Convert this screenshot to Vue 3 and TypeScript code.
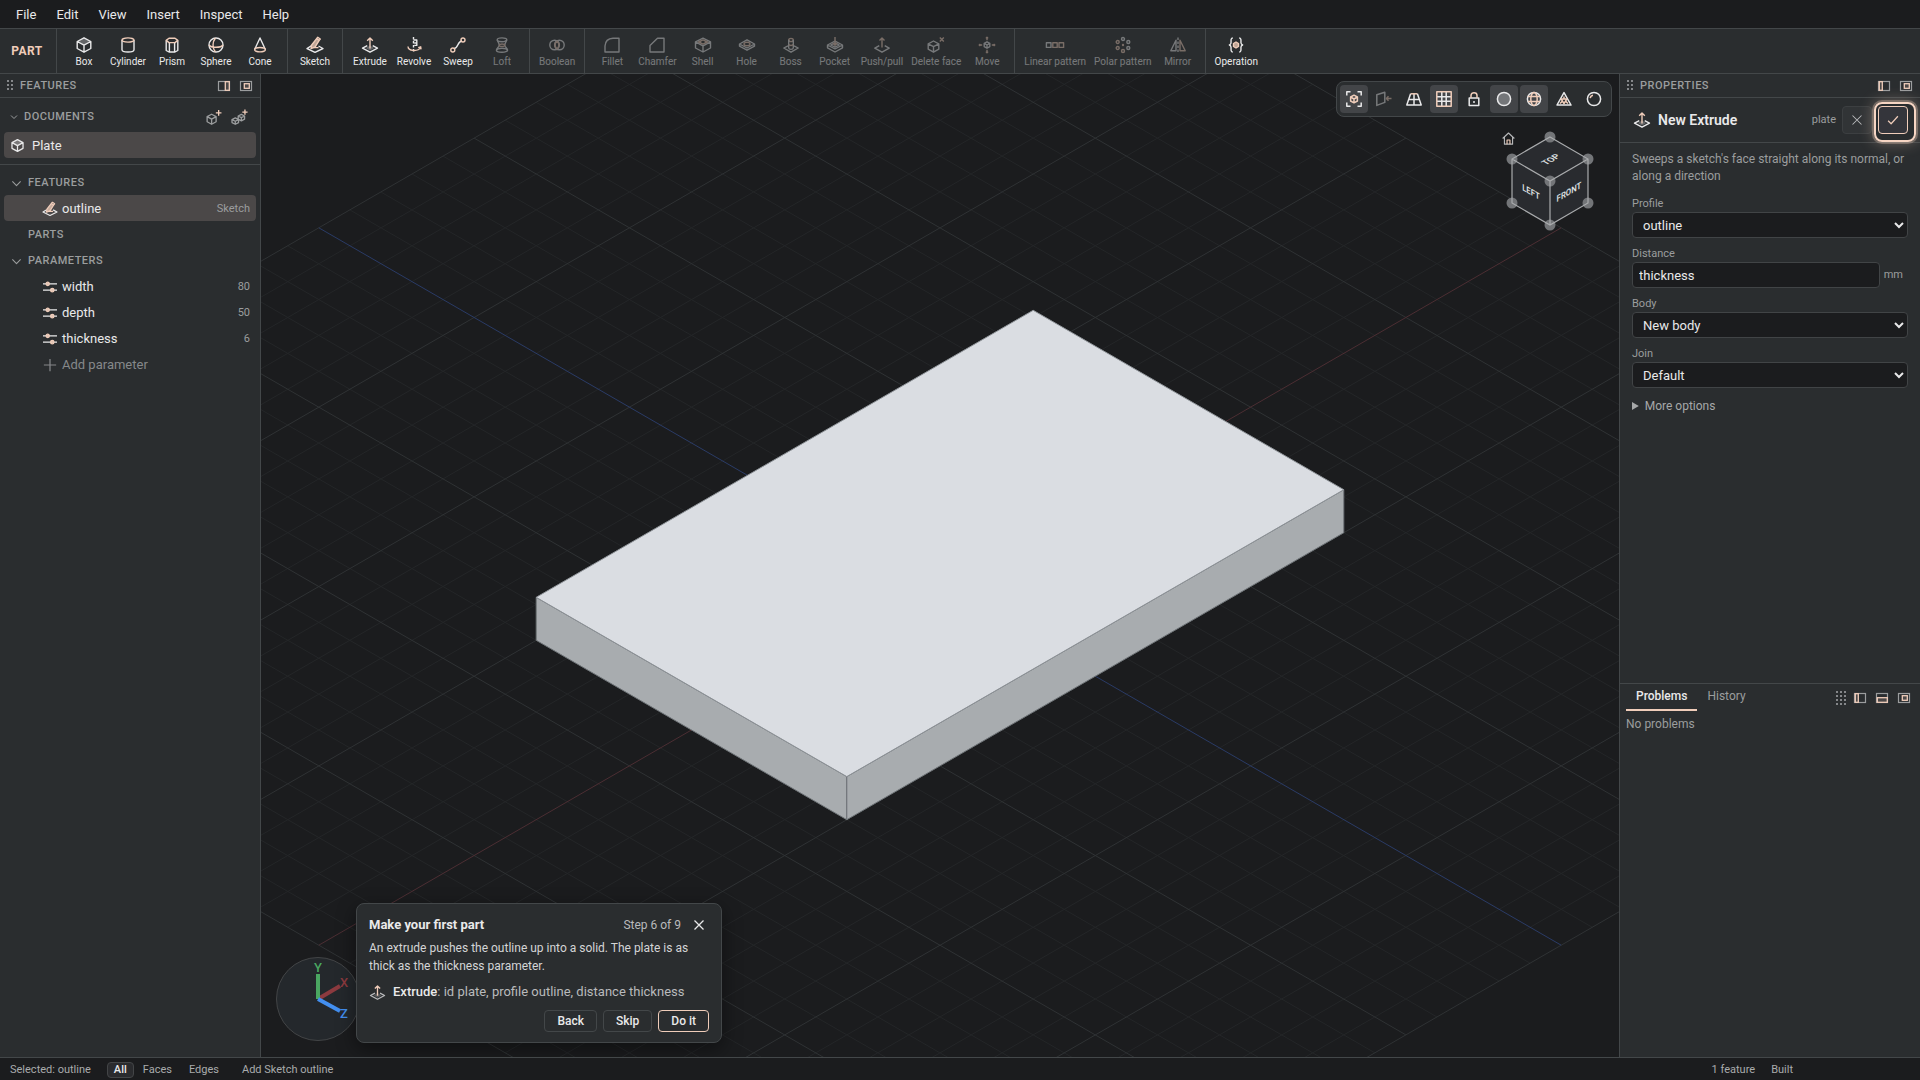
<script setup lang="ts">
import { h, ref, type FunctionalComponent } from 'vue'

type Tone = 'w' | 'a' | 'wf' | 'af' | 'd' | 'df'
type Shape = [Tone, string]

const ring = (x: number, y: number, r: number, ry = r) =>
  `M${x - r} ${y}a${r} ${ry} 0 1 0 ${2 * r} 0a${r} ${ry} 0 1 0 ${-2 * r} 0`

// w: foreground stroke, a: accent stroke, d: dashed stroke; an f suffix fills the shape too
const icons: Record<string, Shape[]> = {
  box: [['df', 'M8 .8 14.8 4.5 8 8.2 1.2 4.5Z'], ['w', 'M8 .8 14.8 4.5V11.5L8 15.2 1.2 11.5V4.5ZM1.2 4.5 8 8.2 14.8 4.5M8 8.2V15.2']],
  cylinder: [['w', 'M2 3V12.8C2 15.8 14 15.8 14 12.8V3'], ['a', ring(8, 3, 6, 2.1)]],
  prism: [['w', 'M2.2 3.5V13.5L5 15H11L13.8 13.5V3.5M5.4 5.8V15M10.6 5.8V15'], ['a', 'M5 1.2H11L13.8 3.4 11 5.6H5L2.2 3.4Z']],
  sphere: [['w', ring(8, 8, 7)], ['a', 'M1 8C3 11 13 11 15 8M7.5 1C4.2 5 4.2 11 7.5 15']],
  cone: [['w', 'M2.6 12.5 8 1 13.4 12.5'], ['a', ring(8, 12.7, 5.4, 2.2)]],
  sketch: [['w', 'M4.2 8.8 0 11.5 8 15.4 16 11.5 11.5 9'], ['af', 'M4.5 8.2 9.6 1.6 12.2 3.4 8 10.2 4 11.5Z'], ['a', 'M9.6 1.6 10.8.3 13.3 2 12.2 3.4M6.6 10.6H11.5']],
  extrude: [['w', 'M5.3 8.6.5 11.2 8 15.2 15.5 11.2 10.7 8.6'], ['df', 'M8 8.5 12.3 11.1 8 13.5 3.7 11.1Z'], ['a', 'M8 11.5V1M5.2 3.8 8 1 10.8 3.8']],
  revolve: [['d', 'M7.5 0V16'], ['w', 'M7.5 3H10.8V8.4H8.2M8.2 6H10.8'], ['a', 'M2.2 9.5C1 14 12 15 14.5 10.5M12.2 10.6 14.7 9.8 15 12.4']],
  sweep: [['w', 'M3.8 11.6C8.5 11.5 7 4.4 12 4'], ['a', ring(2.8, 13, 2)], ['a', ring(13, 3, 2)]],
  loft: [['w', 'M3.2 3C4.5 5.5 5.5 7 5.2 8.5 5 10 3 11 2.4 13M12.8 3C11.5 5.5 10.5 7 10.8 8.5 11 10 13 11 13.6 13'], ['w', ring(8, 2.8, 4.8, 1.9)], ['a', ring(8, 8.2, 2.7, 1.2)], ['w', ring(8, 13.2, 5.6, 2)]],
  boolean: [['w', ring(5.6, 8, 4.8)], ['w', ring(10.4, 8, 4.8)], ['a', 'M8 4C10.5 6.5 10.5 9.5 8 12 5.5 9.5 5.5 6.5 8 4Z']],
  fillet: [['w', 'M1 15V9Q1.4 1.6 9 1.2H15V15Z']],
  chamfer: [['w', 'M1 15V8.5L8.5 1.2H15V15Z']],
  shell: [['w', 'M8 1.2 15.5 4.8V11L8 15 .5 11V4.8ZM.5 4.8 8 8.8 15.5 4.8M8 8.8V15'], ['a', 'M8 2.8 12.5 5 8 7.2 3.5 5ZM5.5 4.2V6M10.5 4.2V6']],
  hole: [['w', 'M8 2.8 15.5 7 8 11 .5 7ZM.5 7V9.2L8 13.2 15.5 9.2V7'], ['a', ring(8, 7, 3, 1.8)]],
  boss: [['w', 'M5 8.8.8 11 8 15.2 15.2 11 11 8.8'], ['a', ring(8, 3, 2.3, 1.6)], ['w', 'M5.7 3V11C6 12.8 10 12.8 10.3 11V3'], ['a', 'M5.7 7.5Q8 9.5 10.3 7.5']],
  pocket: [['w', 'M8 4 15.5 8 8 12 .5 8ZM.5 8V10.8L8 15 15.5 10.8V8M3.8 8 8 5.8 12.2 8 8 10.2Z'], ['a', 'M8 0V8M5.8 6 8 8.2 10.2 6']],
  pushpull: [['w', 'M5.3 8.6.8 11.2 8 15.2 15.2 11.2 10.7 8.6'], ['a', 'M8 10.5V1M5.5 3.5 8 1 10.5 3.5']],
  deleteface: [['w', 'M5.5 4 10.8 6.8V12.2L5.5 15.2.2 12.2V6.8ZM.2 6.8 5.5 9.6 10.8 6.8M5.5 9.6V15.2'], ['a', 'M11.8.6 15.8 4.6M15.8.6 11.8 4.6']],
  move: [['w', 'M8 4.8 10.8 6.4V9.6L8 11.2 5.2 9.6V6.4ZM5.2 6.4 8 8 10.8 6.4M8 8V11.2'], ['a', 'M8 3.2V.2M6.9 1.4 8 .2 9.1 1.4M8 12.8V15.8M6.9 14.6 8 15.8 9.1 14.6M3.2 8H.2M1.4 6.9.2 8 1.4 9.1M12.8 8H15.8M14.6 6.9 15.8 8 14.6 9.1']],
  linear: [['w', 'M-.6 5.8H4V10.4H-.6Z'], ['a', 'M5.8 5.8H10.2V10.4H5.8ZM12 5.8H16.6V10.4H12Z']],
  polar: [['w', [ring(8, 2, 1.5), ring(13.3, 5, 1.5), ring(13.3, 11, 1.5)].join('')], ['a', [ring(8, 14, 1.5), ring(2.7, 11, 1.5), ring(2.7, 5, 1.5)].join('')], ['af', ring(8, 8, 0.5)]],
  mirror: [['w', 'M6 3.2V13.8H.8Z'], ['a', 'M10 3.2V13.8H15.2Z'], ['d', 'M8 .5V15.5']],
  operation: [['w', 'M4.8 1C2.4 1 3.2 4.2 3 6 2.8 7.4 1.4 8 1.4 8S2.8 8.6 3 10C3.2 11.8 2.4 15 4.8 15M11.2 1C13.6 1 12.8 4.2 13 6 13.2 7.4 14.6 8 14.6 8S13.2 8.6 13 10C12.8 11.8 13.6 15 11.2 15'], ['af', 'M8 5 10.5 6.5V9.5L8 11 5.5 9.5V6.5Z']],
  newdoc: [['w', 'M6 4.5 10.8 7V12.5L6 15.2 1.2 12.5V7ZM1.2 7 6 9.8 10.8 7M6 9.8V15.2'], ['a', 'M13.5 0V6M10.5 3H16.5']],
  newset: [['w', 'M3.5 8.4 7 10.2V13.4L3.5 15.2 0 13.4V10.2ZM0 10.2 3.5 12 7 10.2M3.5 12V15.2M10 4.6 13.4 6.4V9.8L10 11.6 6.6 9.8V6.4ZM6.6 6.4 10 8.2 13.4 6.4M10 8.2V11.6'], ['a', 'M13.8-.6V5M11 2.2H16.6']],
  params: [['w', 'M0 4.4H16M0 11.6H16'], ['af', ring(5.4, 4.4, 1.9)], ['af', ring(10.6, 11.6, 1.9)]],
  plus: [['w', 'M8 1V15M1 8H15']],
  chevron: [['w', 'M2 5 8 11 14 5']],
  close: [['w', 'M2 2 14 14M14 2 2 14']],
  check: [['w', 'M1.5 9 5.5 13 14.5 3']],
  fit: [['w', 'M.8 4.5V.8H4.5M11.5.8H15.2V4.5M15.2 11.5V15.2H11.5M4.5 15.2H.8V11.5'], ['a', 'M8 4.2 11.4 6V10L8 11.8 4.6 10V6ZM4.6 6 8 8 11.4 6M8 8V11.8']],
  plane: [['w', 'M.8 3.8 8.8 1.2V11.4L.8 14.4Z'], ['a', 'M15.5 7.5H10.5M12.5 5.2 10.4 7.5 12.5 9.8']],
  persp: [['w', 'M4.6 2.8.8 14H15.2L11.4 2.8M2.8 8.6H13.2M8 2.8V14'], ['a', 'M4.6 2.8H11.4']],
  grid: [['w', 'M5.8 1V15M10.2 1V15M1 5.8H15M1 10.2H15'], ['a', 'M.8.8H15.2V15.2H.8Z']],
  lock: [['w', 'M3.2 7H12.8V14.6H3.2ZM8 10V12'], ['a', 'M5 7V4.4C5 .8 11 .8 11 4.4V7']],
  disc: [['df', ring(8, 8, 6.6)], ['w', ring(8, 8, 6.6)]],
  globe: [['w', ring(8, 8, 6.6)], ['a', ring(8, 8, 3.2, 6.6) + 'M2 5.4H14M2 10.6H14']],
  mesh: [['w', 'M8 1.6 15 14H1Z'], ['a', 'M5.2 8H10.8L8 12.6ZM8 5.4V8M4 12.5 6.2 10.4M12 12.5 9.8 10.4']],
  ball: [['w', ring(8, 8, 6.6)], ['a', 'M4.2 7.2C4.4 5.6 5.6 4.4 7 4.2']],
  home: [['w', 'M.8 8 8 1.2 15.2 8M3 6.4V15H13V6.4'], ['a', 'M6.2 15V9.8H9.8V15']],
}

const Icon: FunctionalComponent<{ name: string; size?: number; weight?: number }> = (p) =>
  h(
    'svg',
    { width: p.size ?? 16, height: p.size ?? 16, viewBox: '0 0 16 16', overflow: 'visible', 'aria-hidden': 'true', fill: 'none', 'stroke-width': p.weight ?? 1.4, 'stroke-linejoin': 'round' },
    icons[p.name].map(([tone, d]) => {
      const color = tone.startsWith('a') ? 'var(--accent)' : 'currentColor'
      return h('path', {
        d,
        stroke: tone === 'df' ? 'none' : color,
        fill: tone === 'df' ? 'currentColor' : tone === 'af' ? 'var(--accent)' : 'none',
        'fill-opacity': tone === 'df' ? 0.3 : tone === 'af' ? 0.75 : undefined,
        'stroke-dasharray': tone === 'd' ? '2.5 1.5' : undefined,
      })
    }),
  )
Icon.props = ['name', 'size', 'weight']

// docking glyphs: an outlined window with one accented zone
const zones = { right: [7, 1, 4, 8], left: [1, 1, 3, 8], bottom: [1, 5, 10, 4], float: [4, 3, 5, 4] }
const DockIcon: FunctionalComponent<{ zone: keyof typeof zones }> = (p) => {
  const [x, y, w, hh] = zones[p.zone]
  return h('svg', { width: 12, height: 10, viewBox: '0 0 12 10', overflow: 'visible', 'aria-hidden': 'true', fill: 'none' }, [
    h('rect', { x: 0.5, y: 0.5, width: 11, height: 9, stroke: 'currentColor', 'stroke-width': 1.2 }),
    h('rect', { x: x + 0.3, y: y - 0.3, width: w, height: hh + 0.6, stroke: 'var(--accent)', 'stroke-width': 1.3, fill: '#4b4848' }),
  ])
}
DockIcon.props = ['zone']

const menus = ['File', 'Edit', 'View', 'Insert', 'Inspect', 'Help']

const groups: { off?: boolean; tools: [string, string, boolean?][] }[] = [
  { tools: [['box', 'Box'], ['cylinder', 'Cylinder'], ['prism', 'Prism'], ['sphere', 'Sphere'], ['cone', 'Cone']] },
  { tools: [['sketch', 'Sketch']] },
  { tools: [['extrude', 'Extrude'], ['revolve', 'Revolve'], ['sweep', 'Sweep'], ['loft', 'Loft', true]] },
  { off: true, tools: [['boolean', 'Boolean']] },
  { off: true, tools: [['fillet', 'Fillet'], ['chamfer', 'Chamfer'], ['shell', 'Shell'], ['hole', 'Hole'], ['boss', 'Boss'], ['pocket', 'Pocket'], ['pushpull', 'Push/pull'], ['deleteface', 'Delete face'], ['move', 'Move']] },
  { off: true, tools: [['linear', 'Linear pattern'], ['polar', 'Polar pattern'], ['mirror', 'Mirror']] },
  { tools: [['operation', 'Operation']] },
]

const params = [
  { name: 'width', value: 80 },
  { name: 'depth', value: 50 },
  { name: 'thickness', value: 6 },
]

const viewTools = [
  { icon: 'fit', label: 'Fit view', on: true },
  { icon: 'plane', label: 'Look at plane', off: true },
  { icon: 'persp', label: 'Perspective' },
  { icon: 'grid', label: 'Grid', on: true },
  { icon: 'lock', label: 'Lock rotation' },
  { icon: 'disc', label: 'Shaded', on: true },
  { icon: 'globe', label: 'Edges', on: true },
  { icon: 'mesh', label: 'Mesh' },
  { icon: 'ball', label: 'Material' },
]

const distance = ref('thickness')

// Isometric projection, millimetres to scene units; u runs along X, v along Z
const UX = 6.212
const UY = 3.587
const RISE = 7.175
const project = (u: number, v: number, z = 0) => {
  const x = (u + v) * UX
  const y = (v - u) * UY + (3 - z) * RISE
  return `${x.toFixed(1)} ${y.toFixed(1)}`
}
const line = (k: number) => `M${project(-100, k)}L${project(100, k)}M${project(k, -100)}L${project(k, 100)}`
const steps = Array.from({ length: 41 }, (_, i) => (i - 20) * 5)
const minor = steps.filter((k) => k % 25 !== 0).map(line).join('')
const major = steps.filter((k) => k % 25 === 0 && k !== 0).map(line).join('')
const axisX = `M${project(-100, 0)}L${project(100, 0)}`
const axisZ = `M${project(0, -100)}L${project(0, 100)}`
const topFace = `M${project(-40, -25, 6)}L${project(40, -25, 6)}L${project(40, 25, 6)}L${project(-40, 25, 6)}Z`
const leftFace = `M${project(-40, -25, 6)}L${project(-40, 25, 6)}L${project(-40, 25)}L${project(-40, -25)}Z`
const frontFace = `M${project(-40, 25, 6)}L${project(40, 25, 6)}L${project(40, 25)}L${project(-40, 25)}Z`

const corners = [[50, 10], [12, 32], [88, 32], [50, 54], [12, 76], [88, 76], [50, 98]]
</script>

<template>
  <div class="app">
    <nav class="menubar">
      <button v-for="m in menus" :key="m" type="button">{{ m }}</button>
    </nav>

    <div class="toolbar">
      <strong class="mode">PART</strong>
      <div v-for="(g, i) in groups" :key="i" class="group">
        <button v-for="[icon, label, off] in g.tools" :key="icon" type="button" class="tool" :disabled="g.off || off">
          <Icon :name="icon" />
          <span>{{ label }}</span>
        </button>
      </div>
    </div>

    <div class="body">
      <aside class="side left">
        <header class="dock-head">
          <i class="grip"></i>
          <h2>FEATURES</h2>
          <button type="button" aria-label="Dock right"><DockIcon zone="right" /></button>
          <button type="button" aria-label="Float"><DockIcon zone="float" /></button>
        </header>
        <section class="docs">
          <div class="docs-head">
            <Icon name="chevron" :size="8" :weight="2" />
            <h3>DOCUMENTS</h3>
            <button type="button" aria-label="New part"><Icon name="newdoc" :size="15" /></button>
            <button type="button" aria-label="New assembly"><Icon name="newset" :size="15" /></button>
          </div>
          <button type="button" class="doc"><Icon name="box" :size="13" :weight="1.6" />Plate</button>
        </section>
        <section class="tree">
          <div class="branch"><Icon name="chevron" :size="11" :weight="1.6" /><h3>FEATURES</h3></div>
          <button type="button" class="leaf selected"><Icon name="sketch" :size="14" /><span>outline</span><small>Sketch</small></button>
          <div class="branch"><i class="no-caret"></i><h3>PARTS</h3></div>
          <div class="branch"><Icon name="chevron" :size="11" :weight="1.6" /><h3>PARAMETERS</h3></div>
          <button v-for="p in params" :key="p.name" type="button" class="leaf">
            <Icon name="params" :size="14" :weight="1.5" /><span>{{ p.name }}</span><small>{{ p.value }}</small>
          </button>
          <button type="button" class="leaf add"><Icon name="plus" :size="14" :weight="1.4" /><span>Add parameter</span></button>
        </section>
      </aside>

      <main class="viewport">
        <svg class="scene" viewBox="-679 -491 1358 983" preserveAspectRatio="xMidYMid slice" role="img" aria-label="Plate model">
          <path class="minor" :d="minor" />
          <path class="major" :d="major" />
          <path class="axis-x" :d="axisX" />
          <path class="axis-z" :d="axisZ" />
          <path class="wall" :d="leftFace" />
          <path class="wall" :d="frontFace" />
          <path class="top" :d="topFace" />
        </svg>

        <div class="view-tools">
          <button v-for="t in viewTools" :key="t.icon" type="button" :aria-label="t.label" :class="{ on: t.on }" :disabled="t.off">
            <Icon :name="t.icon" :weight="1.5" />
          </button>
        </div>

        <div class="cube">
          <button type="button" aria-label="Home view"><Icon name="home" :size="13" /></button>
          <svg width="100" height="108" viewBox="0 0 100 108" role="img" aria-label="View cube">
            <path class="cube-body" d="M50 10 88 32V76L50 98 12 76V32Z" />
            <circle v-for="([x, y], i) in corners" :key="i" :cx="x" :cy="y" r="5.5" />
            <path class="cube-edge" d="M50 10 88 32V76L50 98 12 76V32ZM12 32 50 54 88 32M50 54V98" />
            <text transform="matrix(.866 -.5 .866 .5 50 32)" y="4">TOP</text>
            <text transform="matrix(.866 .5 0 1 31 65)" y="3">LEFT</text>
            <text transform="matrix(.866 -.5 0 1 69 65)" y="3">FRONT</text>
          </svg>
        </div>

        <svg class="gizmo" width="84" height="84" viewBox="0 0 84 84" role="img" aria-label="Axes">
          <circle cx="42" cy="42" r="41.5" />
          <g class="gx"><path d="M42 42 64 29" /><text x="68" y="30">X</text></g>
          <g class="gy"><path d="M42 42V17" /><text x="42" y="15">Y</text></g>
          <g class="gz"><path d="M42 42 64 54" /><text x="68" y="61">Z</text></g>
        </svg>

        <section class="coach">
          <header>
            <h2>Make your first part</h2>
            <span>Step 6 of 9</span>
            <button type="button" aria-label="Close"><Icon name="close" :size="12" :weight="1.7" /></button>
          </header>
          <p>An extrude pushes the outline up into a solid. The plate is as thick as the thickness parameter.</p>
          <div class="step"><Icon name="extrude" :size="15" /><span><b>Extrude</b>: id plate, profile outline, distance thickness</span></div>
          <footer>
            <button type="button">Back</button>
            <button type="button">Skip</button>
            <button type="button" class="primary">Do it</button>
          </footer>
        </section>
      </main>

      <aside class="side right">
        <header class="dock-head">
          <i class="grip"></i>
          <h2>PROPERTIES</h2>
          <button type="button" aria-label="Dock left"><DockIcon zone="left" /></button>
          <button type="button" aria-label="Float"><DockIcon zone="float" /></button>
        </header>
        <div class="op-head">
          <Icon name="extrude" />
          <h1>New Extrude</h1>
          <span>plate</span>
          <button type="button" aria-label="Cancel"><Icon name="close" :size="12" :weight="1.4" /></button>
          <button type="button" aria-label="Apply" class="apply"><Icon name="check" :size="12" :weight="1.6" /></button>
        </div>
        <form class="fields" @submit.prevent>
          <p>Sweeps a sketch's face straight along its normal, or along a direction</p>
          <label for="profile">Profile</label>
          <select id="profile"><option>outline</option></select>
          <label for="distance">Distance</label>
          <div class="measure"><input id="distance" v-model="distance" type="text" /><span>mm</span></div>
          <label for="body">Body</label>
          <select id="body"><option>New body</option></select>
          <label for="join">Join</label>
          <select id="join"><option>Default</option></select>
          <details><summary>More options</summary></details>
        </form>
        <section class="problems">
          <header>
            <button type="button" class="tab current">Problems</button>
            <button type="button" class="tab">History</button>
            <i class="grip wide"></i>
            <button type="button" aria-label="Dock left"><DockIcon zone="left" /></button>
            <button type="button" aria-label="Dock bottom"><DockIcon zone="bottom" /></button>
            <button type="button" aria-label="Float"><DockIcon zone="float" /></button>
          </header>
          <p>No problems</p>
        </section>
      </aside>
    </div>

    <footer class="status">
      <span>Selected: outline</span>
      <div class="filters">
        <button type="button" class="current">All</button>
        <button type="button">Faces</button>
        <button type="button">Edges</button>
      </div>
      <span>Add Sketch outline</span>
      <div class="built"><span>1 feature</span><span>Built</span></div>
    </footer>
  </div>
</template>

<style>
body {
  background: #1b1c1e;
}
</style>

<style scoped>
.app {
  --accent: #f0cdba;
  --line: #434749;
  --panel: #2a2d2f;
  --ink: #e9e9ea;
  --dim: #9b9d9e;
  display: flex;
  flex-direction: column;
  height: 100vh;
  color: var(--ink);
  background: #1b1c1e;
  font: 400 12px/16px Roboto, 'Liberation Sans', sans-serif;
  color-scheme: dark;
  overflow: hidden;
}
* {
  box-sizing: border-box;
}
button {
  margin: 0;
  padding: 0;
  border: 0;
  background: none;
  color: inherit;
  font: inherit;
}
h1, h2, h3, p {
  margin: 0;
  font: inherit;
}
svg {
  display: block;
  flex: none;
}

.menubar {
  display: flex;
  height: 29px;
  padding: 2px 6px 0;
  border-bottom: 1px solid var(--line);
}
.menubar button {
  padding: 0 10px;
  font-size: 13px;
}
.toolbar {
  display: flex;
  height: 45px;
  background: var(--panel);
  border-bottom: 1px solid var(--line);
}
.mode {
  display: grid;
  place-items: center;
  width: 56px;
  padding-right: 2px;
  color: var(--accent);
  font-size: 12px;
  font-weight: 700;
  letter-spacing: 0.5px;
}
.group {
  display: flex;
  padding: 0 5px;
  border-left: 1px solid var(--line);
}
.tool {
  display: flex;
  flex-direction: column;
  align-items: center;
  gap: 3px;
  min-width: 44px;
  padding: 8px 4px 0;
  font-size: 10px;
  line-height: 12px;
}
.tool:disabled {
  opacity: 0.4;
}

.body {
  display: flex;
  flex: 1;
  min-height: 0;
}
.side {
  display: flex;
  flex-direction: column;
  flex: none;
  background: var(--panel);
}
.left {
  width: 261px;
  border-right: 1px solid var(--line);
}
.right {
  width: 301px;
  border-left: 1px solid var(--line);
}
.dock-head {
  display: flex;
  align-items: center;
  height: 24px;
  padding: 0 8px 0 7px;
  gap: 10px;
  border-bottom: 1px solid var(--line);
  color: var(--dim);
}
h2, h3 {
  flex: 1;
  font-size: 11px;
  font-weight: 500;
  letter-spacing: 0.5px;
}
.dock-head h2 {
  margin-left: -4px;
}
.grip {
  width: 7px;
  height: 11px;
  background: radial-gradient(circle at 1px 1px, #85878a 1px, transparent 1px) 0 0 / 4px 4px;
}
.grip.wide {
  width: 10px;
  height: 14px;
}
.docs {
  padding: 5px 4px 6px;
  border-bottom: 1px solid var(--line);
}
.docs-head {
  display: flex;
  align-items: center;
  height: 26px;
  margin-bottom: 3px;
  padding: 2px 4px 0 6px;
  gap: 6px;
  color: var(--dim);
}
.docs-head button {
  width: 20px;
}
.doc {
  display: flex;
  align-items: center;
  gap: 8px;
  width: 100%;
  height: 26px;
  padding: 1px 7px 0;
  border-radius: 4px;
  background: #4b4848;
  font-size: 13px;
}
.tree {
  display: flex;
  flex-direction: column;
  padding: 4px;
}
.branch {
  display: flex;
  align-items: center;
  height: 26px;
  padding: 2px 0 0 7px;
  gap: 6px;
  color: var(--dim);
}
.no-caret {
  width: 11px;
}
.leaf {
  display: flex;
  align-items: center;
  gap: 5px;
  height: 26px;
  padding: 2px 6px 0 39px;
  border-radius: 4px;
  font-size: 13px;
  text-align: left;
}
.leaf span {
  flex: 1;
}
.leaf small {
  color: var(--dim);
  font-size: 11px;
}
.selected {
  background: #4b4848;
}
.add {
  color: #85888a;
}

.viewport {
  position: relative;
  flex: 1;
  min-width: 0;
  overflow: hidden;
}
.scene {
  width: 100%;
  height: 100%;
  fill: none;
}
.minor { stroke: #242628; }
.major { stroke: #2f3234; }
.axis-x { stroke: #4c2e33; }
.axis-z { stroke: #2a3b66; }
.wall {
  fill: #a8acaf;
  stroke: #6f7478;
}
.top {
  fill: #dadde2;
  stroke: #8d9297;
}
.view-tools {
  position: absolute;
  top: 7px;
  right: 7px;
  display: flex;
  gap: 2px;
  padding: 3px;
  border: 1px solid var(--line);
  border-radius: 8px;
  background: var(--panel);
}
.view-tools button {
  display: grid;
  place-items: center;
  width: 28px;
  height: 28px;
  border-radius: 4px;
}
.view-tools .on {
  background: #434548;
}
.view-tools button:disabled {
  opacity: 0.4;
}
.cube {
  position: absolute;
  top: 53px;
  right: 19px;
}
.cube button {
  position: absolute;
  top: 5px;
  left: 2px;
  color: #b5b6b8;
}
.cube-body {
  fill: #292b2f;
}
.cube-edge {
  fill: none;
  stroke: #a9abad;
  stroke-width: 1.2;
}
.cube circle {
  fill: #737578;
}
.cube text {
  fill: #dfe0e1;
  font-size: 9px;
  font-weight: 600;
  text-anchor: middle;
}
.gizmo {
  position: absolute;
  left: 15px;
  bottom: 16px;
}
.gizmo circle {
  fill: #24282c;
  stroke: #434547;
}
.gizmo path {
  stroke-width: 4;
}
.gizmo text {
  font-size: 13px;
  font-weight: 500;
  text-anchor: middle;
}
.gx path { stroke: #8c3a3f; }
.gx text { fill: #8c3a3f; }
.gy path { stroke: #4aa661; }
.gy text { fill: #4aa661; }
.gz path { stroke: #438ff0; }
.gz text { fill: #438ff0; }

.coach {
  position: absolute;
  left: 95px;
  bottom: 14px;
  width: 366px;
  padding: 12px 12px 10px;
  border: 1px solid var(--line);
  border-radius: 8px;
  background: var(--panel);
  box-shadow: 0 6px 20px rgba(0, 0, 0, 0.45);
}
.coach header {
  display: flex;
  align-items: center;
  height: 18px;
  color: #b9babc;
}
.coach h2 {
  color: var(--ink);
  font-size: 13px;
  font-weight: 700;
  letter-spacing: 0;
}
.coach header button {
  width: 18px;
  margin-left: 10px;
  padding: 0 2px;
  color: var(--ink);
}
.coach p {
  margin: 5px 0;
  line-height: 18px;
  color: #d4d5d6;
}
.step {
  display: flex;
  align-items: center;
  gap: 8px;
  height: 24px;
  margin-bottom: 6px;
  padding-left: 1px;
  color: #b9babc;
  font-size: 13px;
}
.step b {
  color: var(--ink);
  font-weight: 500;
}
.coach footer {
  display: flex;
  justify-content: flex-end;
  gap: 6px;
}
.coach footer button {
  height: 22px;
  padding: 0 12px;
  border: 1px solid var(--line);
  border-radius: 4px;
  font-weight: 500;
}
.coach footer .primary {
  border-color: var(--accent);
}

.op-head {
  display: flex;
  align-items: center;
  height: 45px;
  padding: 0 12px 0 14px;
  border-bottom: 1px solid var(--line);
}
.op-head h1 {
  flex: 1;
  margin-left: 8px;
  font-size: 14px;
  font-weight: 600;
}
.op-head span {
  color: var(--dim);
  font-size: 11px;
}
.op-head button {
  display: grid;
  place-items: center;
  width: 30px;
  height: 28px;
  margin-left: 6px;
  border: 1px solid #3c3f41;
  border-radius: 4px;
  background: #313436;
  color: #b9babc;
}
.op-head .apply {
  position: relative;
  border-color: var(--accent);
  background: #34353b;
  color: var(--accent);
}
.apply::after {
  content: '';
  position: absolute;
  inset: -5px -9px -9px -5px;
  border: 2px solid #f6d5c3;
  border-radius: 8px;
  box-shadow: 0 0 0 2px rgba(240, 205, 186, 0.3), 0 0 14px 2px rgba(240, 205, 186, 0.3);
}
.fields {
  display: flex;
  flex-direction: column;
  flex: 1;
  padding: 8px 12px;
}
.fields p {
  margin-bottom: 11px;
  color: var(--dim);
  line-height: 17px;
}
.fields label {
  height: 16px;
  color: var(--dim);
  font-size: 11px;
}
.fields select,
.fields input {
  height: 26px;
  padding: 0 6px;
  border: 1px solid #414446;
  border-radius: 4px;
  background: #1b1c1e;
  color: var(--ink);
  font: inherit;
  font-size: 13px;
}
.fields select,
.measure {
  margin-bottom: 8px;
}
.measure {
  display: flex;
  align-items: center;
  padding-right: 5px;
  gap: 4px;
  color: var(--dim);
  font-size: 11px;
}
.measure input {
  flex: 1;
  min-width: 0;
}
.fields details {
  margin-top: 2px;
  color: #a6a8a9;
}
.problems {
  flex: none;
  height: 374px;
  padding: 0 6px;
  border-top: 1px solid var(--line);
  color: var(--dim);
}
.problems header {
  display: flex;
  align-items: center;
  height: 27px;
  padding-right: 4px;
  gap: 10px;
}
.tab {
  align-self: stretch;
  padding: 0 10px 2px;
  margin-right: -10px;
  border-bottom: 2px solid transparent;
}
.tab.current {
  border-color: var(--accent);
  color: var(--ink);
  font-weight: 500;
}
.problems .grip {
  margin-left: auto;
  margin-right: -2px;
}
.problems p {
  padding-top: 5px;
}

.status {
  display: flex;
  align-items: center;
  height: 23px;
  padding: 1px 127px 0 10px;
  border-top: 1px solid var(--line);
  color: #a9abac;
  font-size: 11px;
}
.filters {
  display: flex;
  gap: 1px;
  margin: 0 15px 0 16px;
}
.filters button {
  height: 16px;
  padding: 0 7px;
  line-height: 14px;
  border: 1px solid transparent;
  border-radius: 4px;
}
.filters .current {
  padding: 0 6px;
  border-color: #434547;
  background: #2a2b2e;
  color: var(--ink);
  font-weight: 500;
}
.built {
  display: flex;
  gap: 16px;
  margin-left: auto;
}
</style>
